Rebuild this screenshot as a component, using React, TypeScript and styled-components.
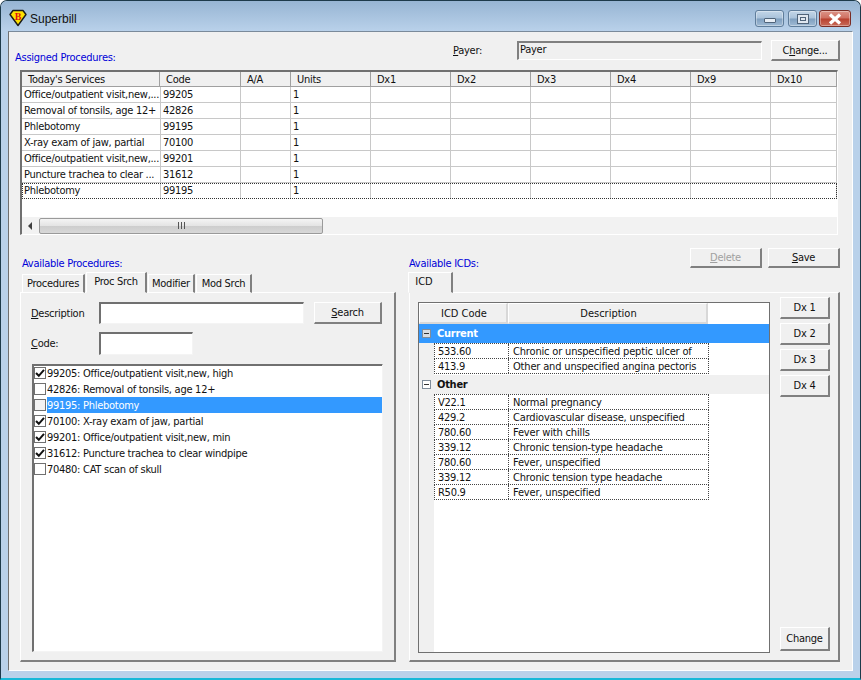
import styled, { createGlobalStyle } from 'styled-components';

const FONT = `"DejaVu Sans Condensed", "Liberation Sans", Arial, sans-serif`;

const GlobalStyle = createGlobalStyle`
  html, body {
    margin: 0;
    padding: 0;
    background: #ffffff;
  }
  * {
    box-sizing: border-box;
  }
`;

const COLUMNS = ["Today's Services", 'Code', 'A/A', 'Units', 'Dx1', 'Dx2', 'Dx3', 'Dx4', 'Dx9', 'Dx10'];

const ASSIGNED = [
  { name: 'Office/outpatient visit,new,...', code: '99205' },
  { name: 'Removal of tonsils, age 12+', code: '42826' },
  { name: 'Phlebotomy', code: '99195' },
  { name: 'X-ray exam of jaw, partial', code: '70100' },
  { name: 'Office/outpatient visit,new,...', code: '99201' },
  { name: 'Puncture trachea to clear ...', code: '31612' },
  { name: 'Phlebotomy', code: '99195', focused: true },
];

const PROCEDURES = [
  { label: '99205: Office/outpatient visit,new, high', checked: true },
  { label: '42826: Removal of tonsils, age 12+', checked: false },
  { label: '99195: Phlebotomy', checked: false, selected: true },
  { label: '70100: X-ray exam of jaw, partial', checked: true },
  { label: '99201: Office/outpatient visit,new, min', checked: true },
  { label: '31612: Puncture trachea to clear windpipe', checked: true },
  { label: '70480: CAT scan of skull', checked: false },
];

const CURRENT_ICDS = [
  ['533.60', 'Chronic or unspecified peptic ulcer of'],
  ['413.9', 'Other and unspecified angina pectoris'],
];

const OTHER_ICDS = [
  ['V22.1', 'Normal pregnancy'],
  ['429.2', 'Cardiovascular disease, unspecified'],
  ['780.60', 'Fever with chills'],
  ['339.12', 'Chronic tension-type headache'],
  ['780.60', 'Fever, unspecified'],
  ['339.12', 'Chronic tension type headache'],
  ['R50.9', 'Fever, unspecified'],
];

function Shield() {
  return (
    <svg width="18" height="18" viewBox="0 0 18 18">
      <path d="M4 1.5 H14 L17 5.5 L9 16.5 L1 5.5 Z" fill="#ffe000" stroke="#1a1a1a" strokeWidth="1.4" strokeLinejoin="round" />
      <text x="9" y="10.5" textAnchor="middle" fontFamily='"Liberation Serif", serif' fontWeight="700" fontSize="10" fill="#e01010">
        B
      </text>
    </svg>
  );
}

function CheckMark() {
  return (
    <svg width="10" height="10" viewBox="0 0 10 10">
      <path d="M1 5 L3.8 7.8 L9 1.8" fill="none" stroke="#111111" strokeWidth="2" />
    </svg>
  );
}

function Underlined({ text, at }: { text: string; at: number }) {
  return (
    <>
      {text.slice(0, at)}
      <u>{text[at]}</u>
      {text.slice(at + 1)}
    </>
  );
}

export default function App() {
  return (
    <Window>
      <GlobalStyle />
      <TitleBar>
        <LogoSlot>
          <Shield />
        </LogoSlot>
        <Title>Superbill</Title>
        <WindowButton>
          <MinimizeGlyph />
        </WindowButton>
        <WindowButton>
          <MaximizeGlyph />
        </WindowButton>
        <CloseButton>
          <svg width="16" height="12" viewBox="0 0 16 12">
            <path d="M3 1.5 L13 10.5 M13 1.5 L3 10.5" stroke="#ffffff" strokeWidth="3.2" />
          </svg>
        </CloseButton>
      </TitleBar>

      <Client>
        <TopRow>
          <AssignedLabel>Assigned Procedures:</AssignedLabel>
          <PayerLabel>
            <Underlined text="Payer:" at={0} />
          </PayerLabel>
          <PayerField>Payer</PayerField>
          <PayerButton>
            <Underlined text="Change..." at={1} />
          </PayerButton>
        </TopRow>

        <Grid>
          <HeaderRow>
            {COLUMNS.map((column) => (
              <HeaderCell key={column}>{column}</HeaderCell>
            ))}
          </HeaderRow>
          {ASSIGNED.map((row, index) => (
            <DataRow key={index} $focused={row.focused}>
              <DataCell>{row.name}</DataCell>
              <DataCell>{row.code}</DataCell>
              <DataCell />
              <DataCell>1</DataCell>
              <DataCell />
              <DataCell />
              <DataCell />
              <DataCell />
              <DataCell />
              <DataCell />
            </DataRow>
          ))}
          <GridSpacer />
          <ScrollBar>
            <ScrollArrow />
            <ScrollThumb>
              <Grip />
            </ScrollThumb>
          </ScrollBar>
        </Grid>

        <ActionRow>
          <ActionButton disabled>
            <Underlined text="Delete" at={0} />
          </ActionButton>
          <ActionButton>
            <Underlined text="Save" at={0} />
          </ActionButton>
        </ActionRow>

        <Columns>
          <LeftColumn>
            <BlueLabel>Available Procedures:</BlueLabel>
            <TabStrip>
              <Tab $width={63}>Procedures</Tab>
              <Tab $width={61} $active>
                Proc Srch
              </Tab>
              <Tab $width={47}>Modifier</Tab>
              <Tab $width={56}>Mod Srch</Tab>
            </TabStrip>
            <ProcPanel>
              <SearchRow>
                <FieldLabel>
                  <Underlined text="Description" at={0} />
                </FieldLabel>
                <TextBox $width={205} />
                <SearchButton>
                  <Underlined text="Search" at={0} />
                </SearchButton>
              </SearchRow>
              <CodeRow>
                <FieldLabel>
                  <Underlined text="Code:" at={0} />
                </FieldLabel>
                <TextBox $width={94} />
              </CodeRow>
              <CheckList>
                {PROCEDURES.map((item) => (
                  <CheckItem key={item.label}>
                    <CheckBox $selected={item.selected}>{item.checked && <CheckMark />}</CheckBox>
                    <CheckText $selected={item.selected}>{item.label}</CheckText>
                  </CheckItem>
                ))}
              </CheckList>
            </ProcPanel>
          </LeftColumn>

          <RightColumn>
            <RightLabel>Available ICDs:</RightLabel>
            <TabStrip>
              <IcdTab $width={45} $active>
                ICD
              </IcdTab>
            </TabStrip>
            <IcdPanel>
              <IcdTable>
                <IcdHeader>
                  <IcdHeaderCell $width={89}>ICD Code</IcdHeaderCell>
                  <IcdHeaderCell $width={200}>Description</IcdHeaderCell>
                </IcdHeader>
                <GroupRow $current>
                  <Expander $current />
                  <GroupName>Current</GroupName>
                </GroupRow>
                <IcdRows>
                  {CURRENT_ICDS.map(([code, text], index) => (
                    <IcdRow key={index}>
                      <IcdCode>{code}</IcdCode>
                      <IcdText>{text}</IcdText>
                    </IcdRow>
                  ))}
                </IcdRows>
                <GroupRow>
                  <Expander />
                  <GroupName>Other</GroupName>
                </GroupRow>
                <IcdRows>
                  {OTHER_ICDS.map(([code, text], index) => (
                    <IcdRow key={index}>
                      <IcdCode>{code}</IcdCode>
                      <IcdText>{text}</IcdText>
                    </IcdRow>
                  ))}
                </IcdRows>
              </IcdTable>
              <DxColumn>
                <DxButton>Dx 1</DxButton>
                <DxButton>Dx 2</DxButton>
                <DxButton>Dx 3</DxButton>
                <DxButton>Dx 4</DxButton>
                <ChangeButton>Change</ChangeButton>
              </DxColumn>
            </IcdPanel>
          </RightColumn>
        </Columns>
      </Client>
    </Window>
  );
}

const Window = styled.div`
  width: 861px;
  height: 680px;
  display: flex;
  flex-direction: column;
  overflow: hidden;
  font-family: ${FONT};
  font-size: 11px;
  letter-spacing: -0.27px;
  color: #111111;
  background: #b9d1ea;
  border: 1px solid #1d3a4a;
  border-bottom: 2px solid #18b8d8;
  border-radius: 7px 7px 0 0;
`;

const TitleBar = styled.div`
  height: 30px;
  flex: none;
  display: flex;
  align-items: flex-start;
  padding: 9px 9px 0 8px;
  background: linear-gradient(#97b5d3, #b9d1ea);
`;

const LogoSlot = styled.div`
  width: 18px;
  height: 18px;
  margin-top: -1px;
`;

const Title = styled.div`
  flex: 1;
  margin-left: 3px;
  padding-top: 2px;
  font-family: "Liberation Sans", Arial, sans-serif;
  font-size: 12px;
  letter-spacing: 0;
  color: #111111;
`;

const WindowButton = styled.div`
  width: 29px;
  height: 17px;
  margin-left: 4px;
  display: flex;
  align-items: center;
  justify-content: center;
  border: 1px solid #5f7d9b;
  border-radius: 3px;
  background: linear-gradient(#c3d6e8 0%, #a9c2da 48%, #7f9fbf 52%, #9fbad4 100%);
  box-shadow: inset 0 0 0 1px rgba(255, 255, 255, 0.35);
`;

const MinimizeGlyph = styled.div`
  width: 12px;
  height: 5px;
  margin-top: 4px;
  background: #e8eef5;
  border: 1px solid #50647a;
  border-radius: 1px;
`;

const MaximizeGlyph = styled.div`
  width: 12px;
  height: 10px;
  background: #dfe7f0;
  border: 1px solid #50647a;
  box-shadow: inset 0 0 0 2px #dfe7f0, inset 0 0 0 3px #50647a;
`;

const CloseButton = styled(WindowButton)`
  width: 32px;
  margin-left: 2px;
  border-color: #7a2c24;
  background: linear-gradient(#dc9488 0%, #cf6f60 48%, #b8402e 52%, #c86a58 100%);
`;

const Client = styled.div`
  flex: 1;
  margin: 0 7px 7px;
  background: #f0f0f0;
  border: 1px solid #ffffff;
  border-top: 1px solid #7a8a9a;
  border-left: 1px solid #707070;
  padding-top: 8px;
  display: flex;
  flex-direction: column;
`;

const TopRow = styled.div`
  height: 21px;
  display: flex;
  align-items: center;
  padding: 0 11px 0 6px;
`;

const AssignedLabel = styled.div`
  width: 438px;
  align-self: flex-end;
  margin-bottom: -3px;
  color: #0000d8;
`;

const PayerLabel = styled.div`
  width: 64px;
  margin-top: -1px;
`;

const PayerField = styled.div`
  width: 245px;
  height: 19px;
  line-height: 14px;
  padding-left: 1px;
  border: 1px solid #ffffff;
  border-top: 2px solid #808080;
  border-left: 2px solid #808080;
`;

const Button = styled.div<{ disabled?: boolean }>`
  display: flex;
  align-items: center;
  justify-content: center;
  background: #f0f0f0;
  border: 1px solid #ffffff;
  border-right: 2px solid #808080;
  border-bottom: 2px solid #808080;
  color: ${({ disabled }) => (disabled ? '#a0a0a0' : '#111111')};
`;

const PayerButton = styled(Button)`
  width: 69px;
  height: 21px;
  margin-left: 9px;
`;

const Grid = styled.div`
  width: 818px;
  height: 165px;
  margin: 9px 0 0 11px;
  display: flex;
  flex-direction: column;
  background: #ffffff;
  border: 1px solid #ffffff;
  border-top: 2px solid #707070;
  border-left: 2px solid #707070;
  overflow: hidden;
`;

const HeaderRow = styled.div`
  height: 15px;
  flex: none;
  display: grid;
  grid-template-columns: 138px 81px 50px 80px 80px 80px 80px 80px 80px 66px;
  background: #f0f0f0;
  border-bottom: 1px solid #a0a0a0;
`;

const HeaderCell = styled.div`
  padding: 1px 0 0 6px;
  line-height: 13px;
  border-right: 1px solid #a0a0a0;
`;

const DataRow = styled.div<{ $focused?: boolean }>`
  height: 16px;
  flex: none;
  display: grid;
  grid-template-columns: 139px 80px 50px 80px 80px 80px 80px 80px 80px 66px;
  border-bottom: 1px ${({ $focused }) => ($focused ? 'dotted #333333' : 'solid #c8c8c8')};
  ${({ $focused }) => $focused && 'outline: 1px dotted #333333; outline-offset: -1px;'}
`;

const DataCell = styled.div`
  padding-left: 2px;
  line-height: 15px;
  white-space: nowrap;
  overflow: hidden;
  border-right: 1px solid #c8c8c8;
`;

const GridSpacer = styled.div`
  flex: 1;
`;

const ScrollBar = styled.div`
  height: 17px;
  flex: none;
  display: flex;
  align-items: center;
  background: #f2f2f2;
`;

const ScrollArrow = styled.div`
  width: 17px;
  height: 17px;
  position: relative;
  &::after {
    content: '';
    position: absolute;
    left: 6px;
    top: 5px;
    border: 4px solid transparent;
    border-left: 0;
    border-right: 4px solid #404040;
  }
`;

const ScrollThumb = styled.div`
  width: 284px;
  height: 16px;
  display: flex;
  align-items: center;
  justify-content: center;
  border: 1px solid #9a9a9a;
  border-radius: 2px;
  background: linear-gradient(#f4f4f4, #e4e4e4 48%, #cdcdcd 52%, #d8d8d8);
`;

const Grip = styled.div`
  width: 7px;
  height: 7px;
  background: repeating-linear-gradient(90deg, #555555 0 1px, transparent 1px 3px);
`;

const ActionRow = styled.div`
  height: 20px;
  margin-top: 13px;
  padding-right: 12px;
  display: flex;
  justify-content: flex-end;
  gap: 6px;
`;

const ActionButton = styled(Button)`
  width: 72px;
  height: 20px;
`;

const Columns = styled.div`
  display: flex;
  margin-top: -13px;
  padding-left: 11px;
`;

const LeftColumn = styled.div`
  width: 376px;
  display: flex;
  flex-direction: column;
`;

const RightColumn = styled(LeftColumn)`
  width: 431px;
  margin-left: 13px;
`;

const BlueLabel = styled.div`
  height: 18px;
  padding: 2px 0 0 2px;
  color: #0000d8;
`;

const RightLabel = styled(BlueLabel)`
  padding-left: 0;
`;

const TabStrip = styled.div`
  height: 20px;
  display: flex;
  align-items: flex-end;
  position: relative;
  z-index: 1;
  margin-bottom: -1px;
  padding-left: 1px;
`;

const Tab = styled.div<{ $active?: boolean; $width: number }>`
  width: ${({ $width }) => $width}px;
  height: ${({ $active }) => ($active ? '21px' : '19px')};
  margin-left: 1px;
  text-align: center;
  line-height: 17px;
  background: #f0f0f0;
  border: 1px solid #ffffff;
  border-right: 2px solid #808080;
  border-bottom: ${({ $active }) => ($active ? '1px solid #f0f0f0' : '1px solid #ffffff')};
  white-space: nowrap;
`;

const IcdTab = styled(Tab)`
  margin-left: -2px;
  padding-right: 12px;
  letter-spacing: 0;
`;

const PanelBase = styled.div`
  height: 370px;
  background: #f0f0f0;
  border: 1px solid #ffffff;
  border-right: 2px solid #808080;
  border-bottom: 2px solid #808080;
`;

const ProcPanel = styled(PanelBase)`
  padding: 9px 12px 0 10px;
  display: flex;
  flex-direction: column;
`;

const SearchRow = styled.div`
  display: flex;
  align-items: center;
  height: 22px;
`;

const CodeRow = styled(SearchRow)`
  height: 23px;
  margin-top: 8px;
`;

const FieldLabel = styled.div`
  width: 68px;
`;

const TextBox = styled.div<{ $width: number }>`
  width: ${({ $width }) => $width}px;
  height: 100%;
  background: #ffffff;
  border: 1px solid #f4f4f4;
  border-top: 2px solid #707070;
  border-left: 2px solid #707070;
`;

const SearchButton = styled(Button)`
  width: 68px;
  height: 22px;
  margin-left: 10px;
`;

const CheckList = styled.div`
  width: 351px;
  height: 288px;
  margin: 9px 0 0 1px;
  background: #ffffff;
  border: 1px solid #f4f4f4;
  border-top: 1px solid #707070;
  border-left: 2px solid #707070;
  box-shadow: inset 0 1px #707070;
`;

const CheckItem = styled.div`
  height: 16px;
  display: flex;
  align-items: center;
`;

const CheckBox = styled.div<{ $selected?: boolean }>`
  width: 12px;
  height: 12px;
  margin-right: 1px;
  flex: none;
  display: flex;
  align-items: center;
  justify-content: center;
  border: 1px solid #707070;
  background: ${({ $selected }) => ($selected ? '#f2f2f2' : '#ffffff')};
  svg {
    flex: none;
  }
`;

const CheckText = styled.div<{ $selected?: boolean }>`
  flex: 1;
  height: 16px;
  line-height: 17px;
  color: ${({ $selected }) => ($selected ? '#ffffff' : '#111111')};
  background: ${({ $selected }) => ($selected ? '#3399ff' : 'transparent')};
`;

const IcdPanel = styled(PanelBase)`
  padding: 9px 9px 0 8px;
  display: flex;
`;

const IcdTable = styled.div`
  width: 352px;
  height: 351px;
  flex: none;
  background: linear-gradient(90deg, #f0f0f0 15px, #ffffff 15px);
  border: 1px solid #707070;
  display: flex;
  flex-direction: column;
`;

const IcdHeader = styled.div`
  height: 21px;
  display: flex;
  flex: none;
  background: #ffffff;
`;

const IcdHeaderCell = styled.div<{ $width: number }>`
  width: ${({ $width }) => $width}px;
  padding-left: 2px;
  text-align: center;
  line-height: 19px;
  letter-spacing: 0;
  background: #f0f0f0;
  border: 1px solid #ffffff;
  border-right: 2px solid #d8d8d8;
  border-bottom: 2px solid #d8d8d8;
`;

const GroupRow = styled.div<{ $current?: boolean }>`
  height: 19px;
  margin-top: ${({ $current }) => ($current ? '0' : '1px')};
  flex: none;
  display: flex;
  align-items: center;
  padding-left: 3px;
  background: ${({ $current }) => ($current ? '#3399ff' : '#f0f0f0')};
  color: ${({ $current }) => ($current ? '#ffffff' : '#111111')};
`;

const Expander = styled.div<{ $current?: boolean }>`
  width: 9px;
  height: 9px;
  position: relative;
  border: 1px solid #7f8c9a;
  background: ${({ $current }) => ($current ? '#d8dde2' : '#ffffff')};
  &::after {
    content: '';
    position: absolute;
    left: 1px;
    right: 1px;
    top: 3px;
    height: 1px;
    background: #333333;
  }
`;

const GroupName = styled.div`
  margin-left: 6px;
  font-weight: 700;
`;

const IcdRows = styled.div`
  margin-left: 15px;
  width: 275px;
  background: #ffffff;
  border-top: 1px dotted #444444;
`;

const IcdRow = styled.div`
  height: 15px;
  display: flex;
  border-bottom: 1px dotted #444444;
  border-left: 1px dotted #444444;
  border-right: 1px dotted #444444;
`;

const IcdCode = styled.div`
  width: 74px;
  padding-left: 3px;
  line-height: 15px;
  border-right: 1px dotted #444444;
`;

const IcdText = styled.div`
  flex: 1;
  padding-left: 4px;
  line-height: 15px;
  letter-spacing: -0.17px;
  white-space: nowrap;
  overflow: hidden;
`;

const DxColumn = styled.div`
  width: 50px;
  height: 354px;
  flex: none;
  margin: -5px 0 0 10px;
  display: flex;
  flex-direction: column;
  gap: 4px;
`;

const DxButton = styled(Button)`
  height: 22px;
`;

const ChangeButton = styled(DxButton)`
  height: 24px;
  margin-top: auto;
`;
